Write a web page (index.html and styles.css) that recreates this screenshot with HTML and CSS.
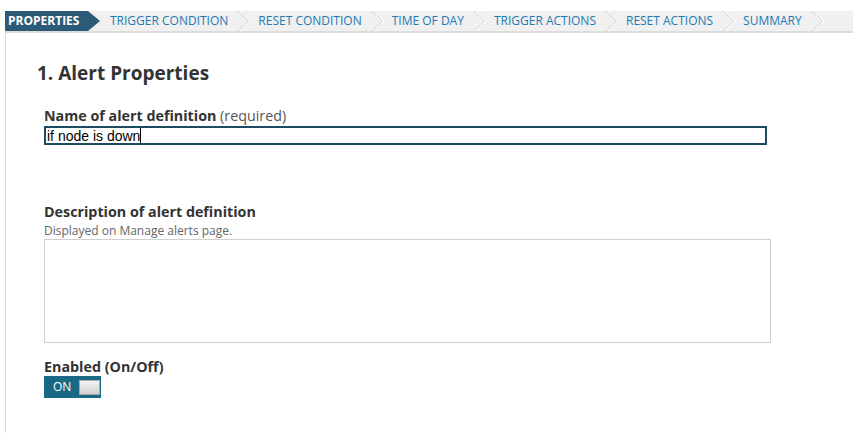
FILE: index.html
```html
<!DOCTYPE html>
<html>
<head>
<meta charset="utf-8">
<link rel="stylesheet" href="styles.css">
</head>
<body>
<nav class="wizard">
  <div class="step active">PROPERTIES</div>
  <div class="step">TRIGGER CONDITION</div>
  <svg class="chev" width="12" height="20" viewBox="0 0 12 20"><polyline points="0.5,0 11,10 0.5,20" fill="none" stroke="#fff" stroke-width="2"/><polyline points="0,0 10.5,10 0,20" fill="none" stroke="#c8c8c8" stroke-width="1"/></svg>
  <div class="step">RESET CONDITION</div>
  <svg class="chev" width="12" height="20" viewBox="0 0 12 20"><polyline points="0.5,0 11,10 0.5,20" fill="none" stroke="#fff" stroke-width="2"/><polyline points="0,0 10.5,10 0,20" fill="none" stroke="#c8c8c8" stroke-width="1"/></svg>
  <div class="step">TIME OF DAY</div>
  <svg class="chev" width="12" height="20" viewBox="0 0 12 20"><polyline points="0.5,0 11,10 0.5,20" fill="none" stroke="#fff" stroke-width="2"/><polyline points="0,0 10.5,10 0,20" fill="none" stroke="#c8c8c8" stroke-width="1"/></svg>
  <div class="step">TRIGGER ACTIONS</div>
  <svg class="chev" width="12" height="20" viewBox="0 0 12 20"><polyline points="0.5,0 11,10 0.5,20" fill="none" stroke="#fff" stroke-width="2"/><polyline points="0,0 10.5,10 0,20" fill="none" stroke="#c8c8c8" stroke-width="1"/></svg>
  <div class="step">RESET ACTIONS</div>
  <svg class="chev" width="12" height="20" viewBox="0 0 12 20"><polyline points="0.5,0 11,10 0.5,20" fill="none" stroke="#fff" stroke-width="2"/><polyline points="0,0 10.5,10 0,20" fill="none" stroke="#c8c8c8" stroke-width="1"/></svg>
  <div class="step">SUMMARY</div>
  <svg class="chev" width="12" height="20" viewBox="0 0 12 20"><polyline points="0.5,0 11,10 0.5,20" fill="none" stroke="#fff" stroke-width="2"/><polyline points="0,0 10.5,10 0,20" fill="none" stroke="#c8c8c8" stroke-width="1"/></svg>
</nav>
<main class="content">
  <h1 class="title">1. Alert Properties</h1>
  <div class="field name">
    <label class="label">Name of alert definition <span class="req">(required)</span></label>
    <div class="input"><span class="value">if node is down</span><span class="caret"></span></div>
  </div>
  <div class="field desc">
    <label class="label">Description of alert definition</label>
    <div class="hint">Displayed on Manage alerts page.</div>
    <div class="textarea"></div>
  </div>
  <div class="field enabled">
    <label class="label">Enabled (On/Off)</label>
    <div class="toggle"><span class="on">ON</span><span class="knob"></span></div>
  </div>
</main>
</body>
</html>
```
FILE: styles.css
```css
html, body {
  margin: 0;
  padding: 0;
  background: #fff;
  font-family: "Open Sans", "Liberation Sans", sans-serif;
}
.wizard {
  margin: 11px 0 0 5px;
  height: 20px;
  background: #f0f0f0;
  border-bottom: 2px solid #dcdcdc;
  display: flex;
  align-items: center;
}
.step {
  font-size: 12px;
  line-height: 20px;
  color: #1d7ab2;
  white-space: nowrap;
  padding: 0 10px 0 0;
}
.chev {
  flex: none;
  margin-right: 8px;
  display: block;
}
.step.active {
  background: #2b5b77;
  color: #fff;
  font-weight: 700;
  width: 92px;
  padding: 0 0 0 3px;
  margin-right: 10px;
  clip-path: polygon(0 0, calc(100% - 12px) 0, 100% 50%, calc(100% - 12px) 100%, 0 100%);
}
.content {
  margin-left: 5px;
  border-left: 1px solid #dadada;
  padding: 27px 0 36px 31px;
  min-height: 340px;
}
.title {
  margin: 0;
  font-size: 19px;
  line-height: 26px;
  font-weight: 700;
  color: #333;
}
.field {
  margin-left: 7px;
}
.label {
  display: block;
  font-size: 14.3px;
  line-height: 18px;
  font-weight: 700;
  color: #333;
}
.name .label {
  margin-top: 21px;
}
.req {
  font-weight: 400;
  color: #555;
}
.input {
  box-sizing: border-box;
  width: 723px;
  height: 19px;
  border: 2px solid #1c4a62;
  margin-top: 1px;
  display: flex;
  align-items: center;
  padding-left: 1px;
  font-family: "Liberation Sans", Arial, sans-serif;
  font-size: 14px;
  color: #000;
}
.caret {
  display: inline-block;
  width: 1px;
  height: 15px;
  background: #000;
}
.desc .label {
  margin-top: 58px;
}
.hint {
  font-size: 12px;
  line-height: 16px;
  margin-top: 2px;
  color: #666;
}
.textarea {
  box-sizing: border-box;
  width: 727px;
  height: 104px;
  border: 1px solid #cfcfcf;
  margin-top: 0;
}
.enabled .label {
  margin-top: 15px;
}
.toggle {
  margin-top: 0;
  width: 57px;
  height: 22px;
  background: #1a6984;
  display: flex;
  align-items: center;
  box-sizing: border-box;
  padding-left: 9px;
}
.on {
  color: #fff;
  font-size: 12px;
  line-height: 22px;
}
.knob {
  margin-left: 8px;
  width: 21px;
  height: 15px;
  box-sizing: border-box;
  border: 1px solid #aaa;
  background: linear-gradient(#f4f4f4, #cfcfcf);
}
```
